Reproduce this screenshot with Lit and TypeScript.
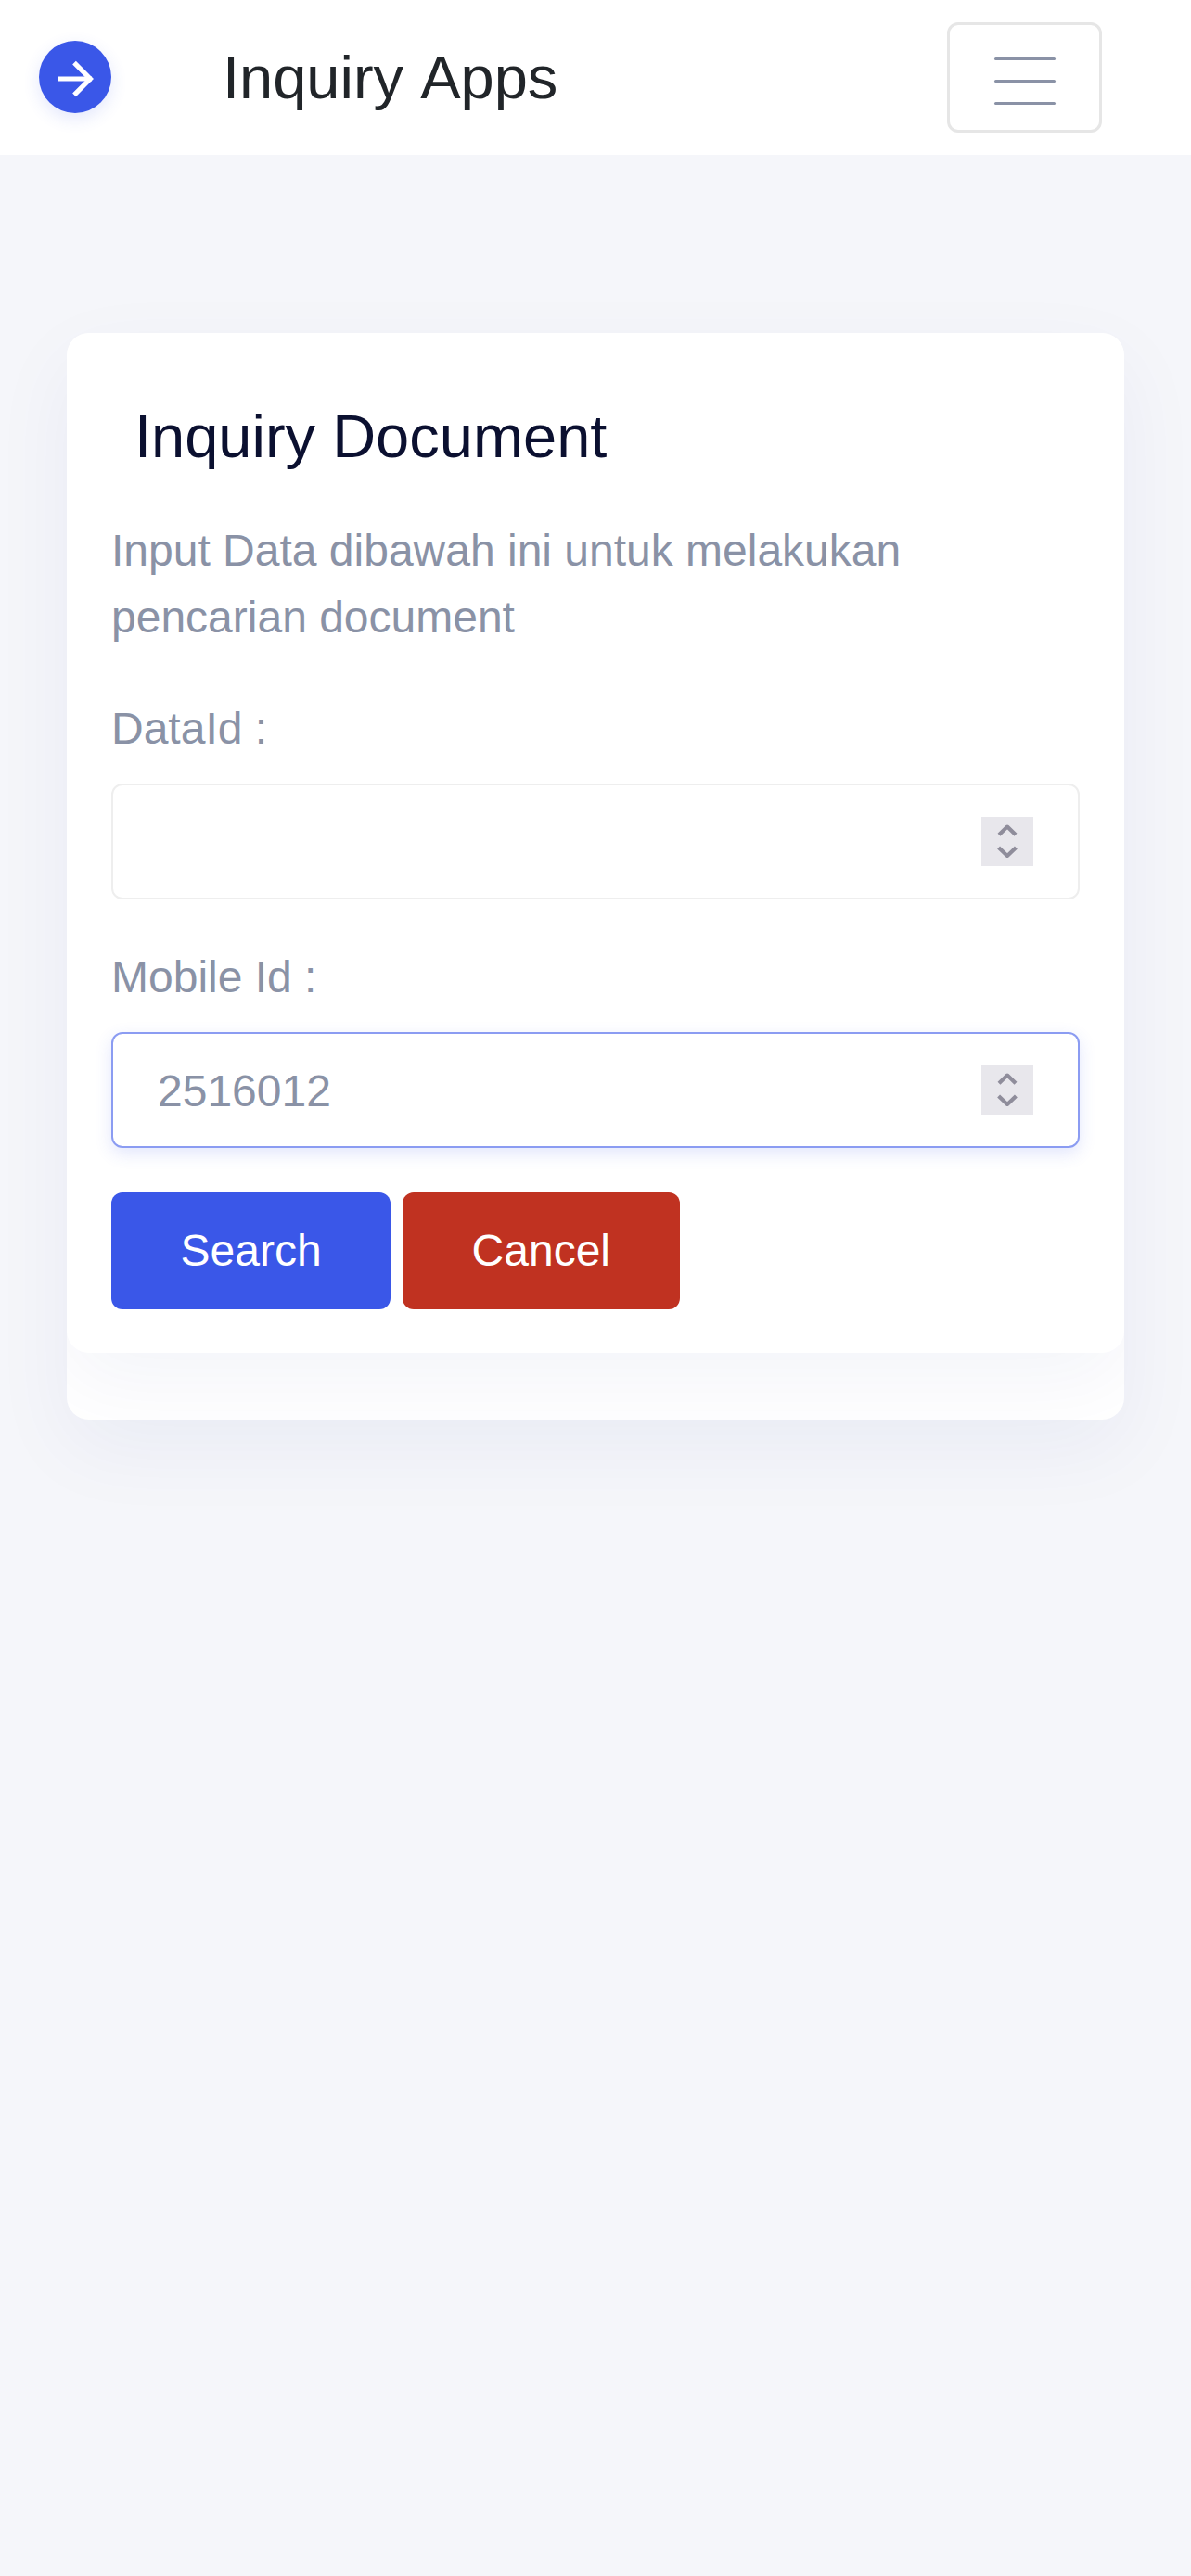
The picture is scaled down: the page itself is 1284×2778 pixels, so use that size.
import { LitElement, html, css } from "lit";
import { customElement, property } from "lit/decorators.js";

@customElement("number-field")
class NumberField extends LitElement {
  @property() label = "";
  @property() value = "";
  @property({ type: Boolean }) active = false;

  static styles = css`
    :host {
      display: block;
      margin-bottom: 48px;
    }
    .label {
      display: block;
      line-height: 72px;
      margin-bottom: 23px;
    }
    .box {
      box-sizing: border-box;
      display: flex;
      align-items: center;
      height: 125px;
      padding: 0 48px;
      border: 2px solid #eee;
      border-radius: 12px;
      background: #fff;
    }
    .box.active {
      border-color: #8b9cf2;
      box-shadow: 0 6px 18px rgba(58, 87, 232, 0.15);
    }
    .input {
      flex: 1;
      min-width: 0;
      height: 72px;
      padding: 2px 0 0;
      border: 0;
      outline: 0;
      background: transparent;
      color: #8a92a6;
      font: 48px/72px "Liberation Sans", Arial, sans-serif;
    }
    .spinner {
      display: block;
      flex: none;
      background: #e8e7ec;
    }
  `;

  render() {
    return html`
      <label class="label" for="field">${this.label}</label>
      <div class="box ${this.active ? "active" : ""}">
        <input class="input" id="field" .value=${this.value} inputmode="numeric" />
        <svg class="spinner" width="56" height="53" viewBox="0 0 56 53" fill="none" stroke="#8f8d9b" stroke-width="4.2" stroke-linejoin="round">
          <path d="M19 19.2 L28 10.6 L37 19.2" />
          <path d="M18.6 33 L28 41.9 L37.4 33" />
        </svg>
      </div>
    `;
  }
}

@customElement("app-root")
class AppRoot extends LitElement {
  static styles = css`
    :host {
      display: block;
      min-height: 2778px;
      background: #f5f6fa;
      color: #8a92a6;
      font: 48px/72px "Liberation Sans", Arial, sans-serif;
    }
    .header {
      box-sizing: border-box;
      display: flex;
      align-items: center;
      height: 167px;
      padding: 0 96px 0 42px;
      background: #fff;
    }
    .logo {
      display: block;
      width: 78px;
      height: 78px;
      margin-bottom: 1px;
      border-radius: 50%;
      background: #3a57e8;
      box-shadow: 0 6px 18px rgba(58, 87, 232, 0.14);
    }
    .brand {
      flex: 1;
      margin: 0 0 0 120px;
      color: #212529;
      font-size: 65px;
      font-weight: 400;
      font-kerning: none;
      white-space: nowrap;
    }
    .menu {
      box-sizing: border-box;
      display: flex;
      flex-direction: column;
      align-items: center;
      justify-content: center;
      gap: 21px;
      width: 167px;
      height: 119px;
      padding: 8px 0 0;
      border: 3px solid #e6e6e6;
      border-radius: 12px;
      background: #fff;
    }
    .bar {
      width: 66px;
      height: 3px;
      border-radius: 1.5px;
      background: #8a92a6;
    }
    .outer,
    .card {
      border-radius: 24px;
      background: #fff;
      box-shadow: 0 30px 90px rgba(17, 38, 146, 0.05);
    }
    .outer {
      margin: 192px 72px 0;
      padding-bottom: 72px;
      overflow: hidden;
    }
    .card {
      box-sizing: border-box;
      height: 1100px;
      padding: 76px 48px 0;
    }
    .title {
      margin: 0 0 51px 25px;
      color: #0b1030;
      font-size: 65px;
      font-weight: 400;
      font-kerning: none;
      line-height: 72px;
    }
    .intro {
      margin: 0 0 48px;
    }
    .actions {
      display: flex;
      gap: 13px;
    }
    .button {
      height: 125.5px;
      padding: 1px 74.5px 0;
      border: 0;
      border-radius: 12px;
      color: #fff;
      font: inherit;
    }
    .search {
      background: #3a57e8;
    }
    .cancel {
      background: #c03221;
    }
  `;

  render() {
    return html`
      <header class="header">
        <svg class="logo" viewBox="0 0 78 78" fill="none" stroke="#fff" stroke-width="5.2">
          <path d="M20 41 H57" />
          <path d="M38 23.7 L55.3 41 L38 58.3" />
        </svg>
        <h4 class="brand">Inquiry Apps</h4>
        <button class="menu" aria-label="Menu">
          <span class="bar"></span><span class="bar"></span><span class="bar"></span>
        </button>
      </header>
      <main class="outer">
        <section class="card">
          <h4 class="title">Inquiry Document</h4>
          <p class="intro">Input Data dibawah ini untuk melakukan pencarian document</p>
          <number-field label="DataId :"></number-field>
          <number-field label="Mobile Id :" value="2516012" active></number-field>
          <div class="actions">
            <button class="button search">Search</button>
            <button class="button cancel">Cancel</button>
          </div>
        </section>
      </main>
    `;
  }
}
